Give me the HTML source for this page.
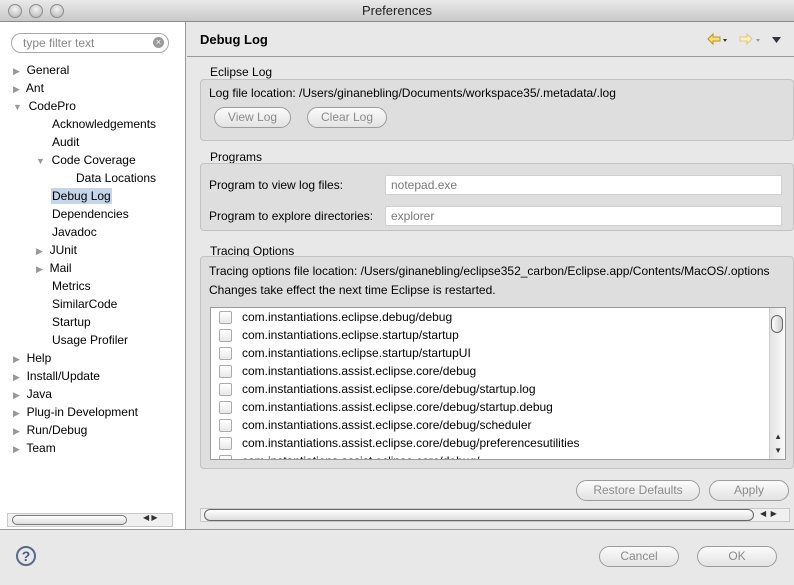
<!DOCTYPE html>
<html><head><meta charset="utf-8"><style>
*{margin:0;padding:0;box-sizing:border-box}
body{width:794px;height:585px;overflow:hidden;background:#e8e8e8;font-family:"Liberation Sans",sans-serif;font-size:12px;color:#000;position:relative}
.a{position:absolute}
.title{left:0;top:0;width:794px;height:22px;background:linear-gradient(#e9e9e9,#c9c9c9);border-bottom:1px solid #8a8a8a;text-align:center;line-height:21px;font-size:13px;color:#222}
.dot{width:14px;height:14px;border-radius:50%;background:radial-gradient(circle at 50% 35%,#f4f4f4,#b0b0b0);border:1px solid #8e8e8e;top:4px}
.left{left:0;top:22px;width:186px;height:507px;background:#fff;border-right:1px solid #9a9a9a}
.tree div{position:absolute;white-space:nowrap;font-size:12px}
.tri{color:#999;font-size:9px}
.sel{background:#c6d5ea}
.box{border:1px solid #c2c2c2;border-radius:4px;background:#dedede}
.gt{font-size:12px}
.btn{border:1px solid #9c9c9c;border-radius:11px;background:linear-gradient(#fbfbfb,#e3e3e3);text-align:center;color:#8a8a8a;line-height:19px;font-size:12px}
.inp{background:#fff;border:1px solid #d0d0d0;color:#777;padding-left:5px;line-height:18px}
.cb{width:13px;height:13px;border:1px solid #aaa;border-radius:2px;background:linear-gradient(#fff,#e8e8e8)}
.row{position:absolute;left:31px;font-size:12px}
</style></head><body>
<div class="a title">Preferences</div>
<div class="a dot" style="left:8px"></div><div class="a dot" style="left:29px"></div><div class="a dot" style="left:50px"></div>

<div class="a left">
 <div class="a" style="left:11px;top:11px;width:158px;height:20px;border:1px solid #a8a8a8;border-radius:10px;background:#fff;color:#888;padding-left:11px;line-height:18px">type filter text</div>
 <div class="a" style="left:153px;top:15px;width:11px;height:11px;border-radius:50%;background:#9a9a9a;color:#fff;font-size:9px;line-height:11px;text-align:center">×</div>
 <div class="tree">
  <div style="left:13px;top:41px"><span class="tri">▶</span>&nbsp; General</div>
  <div style="left:13px;top:59px"><span class="tri">▶</span>&nbsp; Ant</div>
  <div style="left:13px;top:77px"><span class="tri">▼</span>&nbsp; CodePro</div>
  <div style="left:52px;top:95px">Acknowledgements</div>
  <div style="left:52px;top:113px">Audit</div>
  <div style="left:36px;top:131px"><span class="tri">▼</span>&nbsp; Code Coverage</div>
  <div style="left:76px;top:149px">Data Locations</div>
  <div class="sel" style="left:51px;top:166px;padding:1px 1px;">Debug Log</div>
  <div style="left:52px;top:185px">Dependencies</div>
  <div style="left:52px;top:203px">Javadoc</div>
  <div style="left:36px;top:221px"><span class="tri">▶</span>&nbsp; JUnit</div>
  <div style="left:36px;top:239px"><span class="tri">▶</span>&nbsp; Mail</div>
  <div style="left:52px;top:257px">Metrics</div>
  <div style="left:52px;top:275px">SimilarCode</div>
  <div style="left:52px;top:293px">Startup</div>
  <div style="left:52px;top:311px">Usage Profiler</div>
  <div style="left:13px;top:329px"><span class="tri">▶</span>&nbsp; Help</div>
  <div style="left:13px;top:347px"><span class="tri">▶</span>&nbsp; Install/Update</div>
  <div style="left:13px;top:365px"><span class="tri">▶</span>&nbsp; Java</div>
  <div style="left:13px;top:383px"><span class="tri">▶</span>&nbsp; Plug-in Development</div>
  <div style="left:13px;top:401px"><span class="tri">▶</span>&nbsp; Run/Debug</div>
  <div style="left:13px;top:419px"><span class="tri">▶</span>&nbsp; Team</div>
 </div>
 <div class="a" style="left:7px;top:491px;width:166px;height:14px;background:#f0f0f0;border:1px solid #c8c8c8"></div>
 <div class="a" style="left:12px;top:493px;width:115px;height:10px;border:1px solid #777;border-radius:5px;background:linear-gradient(#fff,#ddd)"></div>
 <div class="a" style="left:143px;top:491px;font-size:8px;color:#333">◀ ▶</div>
</div>

<div class="a" style="left:200px;top:32px;font-weight:bold;font-size:13px">Debug Log</div>
<svg class="a" style="left:706px;top:32px" width="80" height="16">
 <path d="M2 7 L7 2 L7 5 L14 5 L14 9 L7 9 L7 12 Z" fill="#f8e070" stroke="#c09020"/>
 <path d="M17 7 l4 0 l-2 3z" fill="#333"/>
 <path d="M46 7 L41 2 L41 5 L34 5 L34 9 L41 9 L41 12 Z" fill="#fbf0c0" stroke="#e0c880"/>
 <path d="M50 7 l4 0 l-2 3z" fill="#999"/>
 <path d="M66 5 l9 0 l-4.5 6z" fill="#334"/>
</svg>
<div class="a" style="left:187px;top:56px;width:607px;height:1px;background:#9a9a9a"></div>

<div class="a gt" style="left:210px;top:65px">Eclipse Log</div>
<div class="a box" style="left:200px;top:79px;width:594px;height:62px"></div>
<div class="a" style="left:209px;top:86px">Log file location: /Users/ginanebling/Documents/workspace35/.metadata/.log</div>
<div class="a btn" style="left:214px;top:107px;width:77px;height:21px">View Log</div>
<div class="a btn" style="left:307px;top:107px;width:80px;height:21px">Clear Log</div>

<div class="a gt" style="left:210px;top:150px">Programs</div>
<div class="a box" style="left:200px;top:163px;width:594px;height:68px"></div>
<div class="a" style="left:209px;top:178px">Program to view log files:</div>
<div class="a inp" style="left:385px;top:175px;width:397px;height:20px">notepad.exe</div>
<div class="a" style="left:209px;top:209px">Program to explore directories:</div>
<div class="a inp" style="left:385px;top:206px;width:397px;height:20px">explorer</div>

<div class="a gt" style="left:210px;top:244px">Tracing Options</div>
<div class="a box" style="left:200px;top:256px;width:594px;height:213px"></div>
<div class="a" style="left:209px;top:264px;white-space:nowrap">Tracing options file location: /Users/ginanebling/eclipse352_carbon/Eclipse.app/Contents/MacOS/.options</div>
<div class="a" style="left:209px;top:283px">Changes take effect the next time Eclipse is restarted.</div>
<div class="a" style="left:210px;top:307px;width:576px;height:153px;background:#fff;border:1px solid #9a9a9a;overflow:hidden">
 <div class="a" style="right:0;top:0;width:16px;height:151px;background:linear-gradient(90deg,#e4e4e4,#fafafa);border-left:1px solid #ccc"></div>
 <div class="a" style="right:2px;top:7px;width:12px;height:18px;border:1px solid #666;border-radius:6px;background:linear-gradient(90deg,#fff,#ccc)"></div>
 <div class="a" style="right:3px;top:122px;font-size:8px;color:#333;line-height:14px">▲<br>▼</div>
 <div class="a cb" style="left:8px;top:3px"></div><div class="row" style="top:2px">com.instantiations.eclipse.debug/debug</div>
 <div class="a cb" style="left:8px;top:21px"></div><div class="row" style="top:20px">com.instantiations.eclipse.startup/startup</div>
 <div class="a cb" style="left:8px;top:39px"></div><div class="row" style="top:38px">com.instantiations.eclipse.startup/startupUI</div>
 <div class="a cb" style="left:8px;top:57px"></div><div class="row" style="top:56px">com.instantiations.assist.eclipse.core/debug</div>
 <div class="a cb" style="left:8px;top:75px"></div><div class="row" style="top:74px">com.instantiations.assist.eclipse.core/debug/startup.log</div>
 <div class="a cb" style="left:8px;top:93px"></div><div class="row" style="top:92px">com.instantiations.assist.eclipse.core/debug/startup.debug</div>
 <div class="a cb" style="left:8px;top:111px"></div><div class="row" style="top:110px">com.instantiations.assist.eclipse.core/debug/scheduler</div>
 <div class="a cb" style="left:8px;top:129px"></div><div class="row" style="top:128px">com.instantiations.assist.eclipse.core/debug/preferencesutilities</div>
 <div class="a cb" style="left:8px;top:147px"></div><div class="row" style="top:146px">com.instantiations.assist.eclipse.core/debug/...</div>
</div>

<div class="a btn" style="left:576px;top:480px;width:124px;height:21px">Restore Defaults</div>
<div class="a btn" style="left:709px;top:480px;width:80px;height:21px">Apply</div>
<div class="a" style="left:200px;top:508px;width:590px;height:14px;background:#f0f0f0;border:1px solid #c8c8c8"></div>
<div class="a" style="left:204px;top:509px;width:550px;height:12px;border:1px solid #666;border-radius:6px;background:linear-gradient(#fff,#ddd)"></div>
<div class="a" style="left:760px;top:509px;font-size:8px;color:#333">◀ &nbsp;▶</div>
<div class="a" style="left:0;top:529px;width:794px;height:1px;background:#9a9a9a"></div>

<div class="a" style="left:16px;top:546px;width:20px;height:20px;border:2px solid #5a6a8a;border-radius:50%;text-align:center;font-weight:bold;color:#4a5a7a;line-height:16px;font-size:14px">?</div>
<div class="a btn" style="left:599px;top:546px;width:80px;height:21px">Cancel</div>
<div class="a btn" style="left:697px;top:546px;width:80px;height:21px">OK</div>
</body></html>
